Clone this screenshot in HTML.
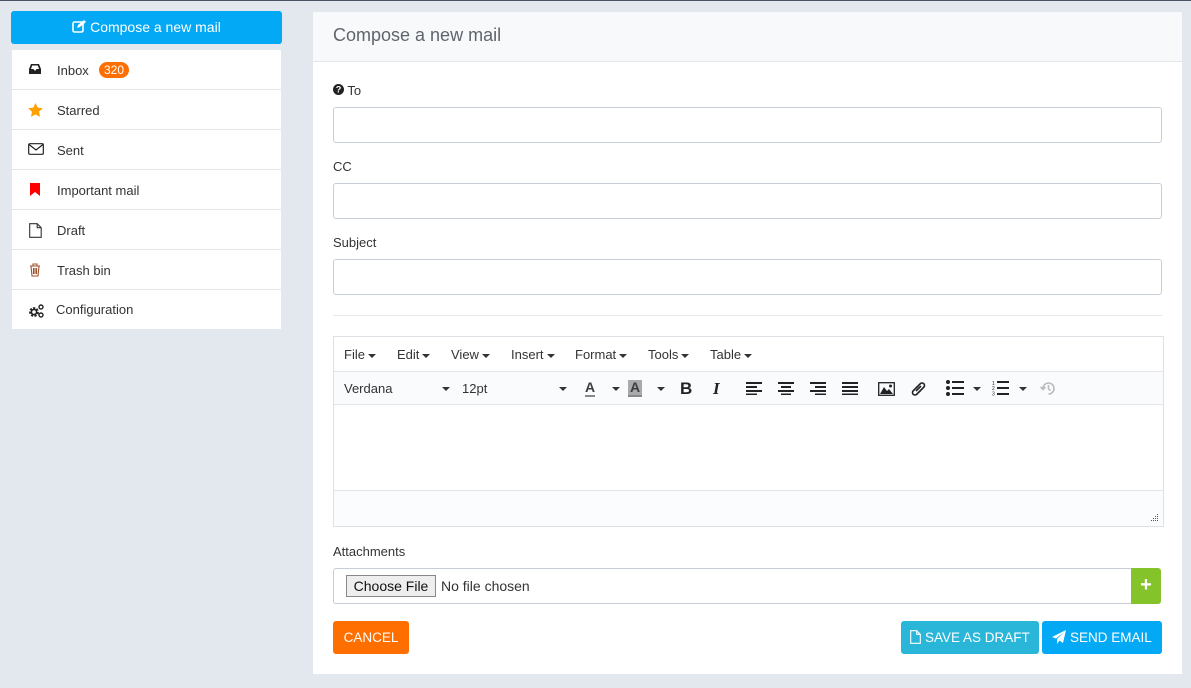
<!DOCTYPE html>
<html><head><meta charset="utf-8"><style>
*{box-sizing:border-box;margin:0;padding:0}
body{width:1191px;height:688px;background:#e3e7ee;font-family:"Liberation Sans",Arial,sans-serif;position:relative;overflow:hidden;color:#3a3f44;font-size:13px}
.topline{position:absolute;left:0;top:0;width:1191px;height:1px;background:#4a5366}
.a{position:absolute}
.compose{left:11px;top:11px;width:271px;height:33px;background:#03a9f4;border-radius:3px;color:#fff;font-size:14px;text-align:center;line-height:32px}
.side{left:12px;top:50px;width:269px;height:279px;background:#fff}
.row{position:absolute;left:0;width:269px;height:40px;border-bottom:1px solid #e3e5e8;font-size:13px;color:#333}
.row span.t{position:absolute;left:45px;top:13px}
.row svg{position:absolute;left:16px;top:13px}
.badge{position:absolute;left:87px;top:12px;background:#ff6f00;color:#fff;font-size:12px;border-radius:9px;padding:1px 5px;line-height:14px}
.card{left:313px;top:12px;width:869px;height:662px;background:#fff}
.head{position:absolute;left:0;top:0;width:869px;height:50px;background:#f8f9fb;border-bottom:1px solid #e3e6ea}
.head div{position:absolute;left:20px;top:13px;font-size:18px;color:#5f656c}
.lbl{position:absolute;left:20px;font-size:13px;color:#333}
.inp{position:absolute;left:20px;width:829px;height:36px;border:1px solid #c7ced8;border-radius:3px;background:#fff}
.btn{position:absolute;top:609px;height:33px;color:#fff;font-size:13.5px;line-height:33px;text-align:center;border-radius:3px}
.mb{position:absolute;top:10px;font-size:13px;color:#333}
.car{display:inline-block;width:0;height:0;border-left:4px solid transparent;border-right:4px solid transparent;border-top:4px solid #333;vertical-align:middle;margin-left:3px}
</style></head><body>
<div class="topline"></div>
<div class="a compose"><svg width="14" height="13" viewBox="0 0 14 13" style="vertical-align:-1px"><rect x="1" y="2" width="10" height="10" rx="1.5" fill="none" stroke="#fff" stroke-width="1.6"/><path d="M5 8l1-3 6-5 2 2-6 5z" fill="#fff"/></svg> Compose a new mail</div>
<div class="a side">
<div class="row" style="top:0"><svg width="14" height="12" viewBox="0 0 14 12"><path d="M1 6L3 1h8l2 5v5H1z" fill="#222"/><path d="M3 6h2.5l1 1.5h1L8.5 6H11L9.8 2.5H4.2z" fill="#fff"/></svg><span class="t">Inbox</span><span class="badge">320</span></div>
<div class="row" style="top:40px"><svg width="15" height="14" viewBox="0 0 24 23"><path d="M12 0l3.6 7.6 8.4 1-6.2 5.8 1.6 8.4L12 18.6 4.6 22.8l1.6-8.4L0 8.6l8.4-1z" fill="#ffa000"/></svg><span class="t">Starred</span></div>
<div class="row" style="top:80px"><svg width="16" height="12" viewBox="0 0 16 12"><rect x="0.7" y="0.7" width="14.6" height="10.6" rx="1" fill="none" stroke="#222" stroke-width="1.2"/><path d="M1 1.5l7 5.5 7-5.5" fill="none" stroke="#222" stroke-width="1.2"/></svg><span class="t">Sent</span></div>
<div class="row" style="top:120px"><svg width="12" height="13" viewBox="0 0 12 13" style="left:17px"><path d="M1 0h10v13L6 9 1 13z" fill="#f00"/></svg><span class="t">Important mail</span></div>
<div class="row" style="top:160px"><svg width="13" height="15" viewBox="0 0 13 15" style="left:17px"><path d="M.7.7h7.5l4 4v9.6H.7z M8.2.7v4h4" fill="none" stroke="#333" stroke-width="1.1"/></svg><span class="t">Draft</span></div>
<div class="row" style="top:200px"><svg width="12" height="14" viewBox="0 0 12 14" style="left:17px"><path d="M1 3h10M4 3V1h4v2M2 3l1 10h6l1-10M4.5 5v6M6 5v6M7.5 5v6" fill="none" stroke="#a0522d" stroke-width="1.1"/></svg><span class="t">Trash bin</span></div>
<div class="row" style="top:240px;border:0"><svg width="17" height="15" viewBox="0 0 17 15"><circle cx="6" cy="9" r="3.6" fill="none" stroke="#222" stroke-width="2.6" stroke-dasharray="2 1.2"/><circle cx="6" cy="9" r="2.6" fill="none" stroke="#222" stroke-width="1.6"/><circle cx="13" cy="4" r="2" fill="none" stroke="#222" stroke-width="1.4"/><circle cx="13" cy="12" r="2" fill="none" stroke="#222" stroke-width="1.4"/></svg><span class="t" style="left:44px;top:12px">Configuration</span></div>
</div>
<div class="a card">
<div class="head"><div>Compose a new mail</div></div>
<div class="lbl" style="top:71px"><svg width="11" height="11" viewBox="0 0 12 12" style="vertical-align:0"><circle cx="6" cy="6" r="6" fill="#222"/><text x="6" y="9.5" font-size="10" font-weight="bold" fill="#fff" text-anchor="middle" font-family="Liberation Sans">?</text></svg> To</div>
<div class="inp" style="top:95px"></div>
<div class="lbl" style="top:147px">CC</div>
<div class="inp" style="top:171px"></div>
<div class="lbl" style="top:223px">Subject</div>
<div class="inp" style="top:247px"></div>
<div class="a" style="left:20px;top:303px;width:829px;height:1px;background:#e6e8eb"></div>
<div class="a" style="left:20px;top:324px;width:831px;height:191px;border:1px solid #dde0e4;background:#fff">
 <div class="a" style="left:0;top:0;width:829px;height:35px;background:#fff;border-bottom:1px solid #e3e5e8">
  <span class="mb" style="left:10px">File<i class="car"></i></span>
  <span class="mb" style="left:63px">Edit<i class="car"></i></span>
  <span class="mb" style="left:117px">View<i class="car"></i></span>
  <span class="mb" style="left:177px">Insert<i class="car"></i></span>
  <span class="mb" style="left:241px">Format<i class="car"></i></span>
  <span class="mb" style="left:314px">Tools<i class="car"></i></span>
  <span class="mb" style="left:376px">Table<i class="car"></i></span>
 </div>
 <div class="a" style="left:0;top:35px;width:829px;height:33px;background:#fafbfc;border-bottom:1px solid #e3e5e8">
  <span class="mb" style="left:10px;top:9px">Verdana</span><i class="car a" style="left:105px;top:15px"></i>
  <span class="mb" style="left:128px;top:9px">12pt</span><i class="car a" style="left:222px;top:15px"></i>
  <span class="a" style="left:251px;top:8px;font-weight:bold;font-size:14px;border-bottom:2px solid #888;line-height:15px">A</span><i class="car a" style="left:275px;top:15px"></i>
  <span class="a" style="left:294px;top:8px;font-weight:bold;font-size:14px;background:#aaa;padding:0 2px;line-height:15px;border-bottom:2px solid #888">A</span><i class="car a" style="left:320px;top:15px"></i>
  <span class="a" style="left:346px;top:7px;font-weight:bold;font-size:17px;color:#222">B</span>
  <span class="a" style="left:379px;top:7px;font-weight:bold;font-style:italic;font-size:17px;color:#222;font-family:'Liberation Serif',serif">I</span>
  <svg class="a" style="left:412px;top:10px" width="130" height="13" viewBox="0 0 130 13" stroke="#222" stroke-width="2"><path d="M0 1h16M0 5h11M0 9h16M0 12.5h11"/><path d="M32 1h16M35 5h10M32 9h16M35 12.5h10"/><path d="M64 1h16M69 5h11M64 9h16M69 12.5h11"/><path d="M96 1h16M96 5h16M96 9h16M96 12.5h16"/></svg>
  <svg class="a" style="left:544px;top:10px" width="17" height="14" viewBox="0 0 17 14"><rect x=".7" y=".7" width="15.6" height="12.6" fill="none" stroke="#222" stroke-width="1.3"/><path d="M2 12l4-7 3 4 2-2 4 5z" fill="#222"/><circle cx="12.5" cy="4" r="1.5" fill="#222"/></svg>
  <svg class="a" style="left:576px;top:9px" width="17" height="16" viewBox="0 0 17 16" fill="none" stroke="#222" stroke-width="1.6"><path d="M7 6l-4 4a2.5 2.5 0 003.5 3.5l4-4"/><path d="M10 10l4-4A2.5 2.5 0 0010.5 2.5l-4 4"/><path d="M6 10l5-5"/></svg>
  <svg class="a" style="left:612px;top:8px" width="18" height="16" viewBox="0 0 18 16" fill="#222"><circle cx="2" cy="2" r="2"/><circle cx="2" cy="8" r="2"/><circle cx="2" cy="14" r="2"/><rect x="6" y="1" width="12" height="2"/><rect x="6" y="7" width="12" height="2"/><rect x="6" y="13" width="12" height="2"/></svg><i class="car a" style="left:636px;top:15px"></i>
  <svg class="a" style="left:658px;top:8px" width="17" height="16" viewBox="0 0 17 16" fill="#222"><text x="0" y="5" font-size="5">1</text><text x="0" y="10" font-size="5">2</text><text x="0" y="15.5" font-size="5">3</text><rect x="5" y="1" width="12" height="2"/><rect x="5" y="7" width="12" height="2"/><rect x="5" y="13" width="12" height="2"/></svg><i class="car a" style="left:682px;top:15px"></i>
  <svg class="a" style="left:706px;top:9px" width="16" height="15" viewBox="0 0 16 15" fill="none" stroke="#bbb" stroke-width="1.6"><path d="M3 7.5a5.5 5.5 0 115.5 5.5"/><path d="M0.5 6l2.5 2.5 2.5-2.5"/><path d="M8.5 4v4l2 1.5"/></svg>
 </div>
 <div class="a" style="left:0;top:153px;width:829px;height:36px;background:#fbfcfd;border-top:1px solid #e3e5e8"></div>
 <svg class="a" style="left:817px;top:177px" width="8" height="8" viewBox="0 0 8 8" fill="#555"><rect x="6" y="0" width="1" height="1"/><rect x="4" y="2" width="1" height="1"/><rect x="6" y="2" width="1" height="1"/><rect x="2" y="4" width="1" height="1"/><rect x="4" y="4" width="1" height="1"/><rect x="6" y="4" width="1" height="1"/><rect x="0" y="6" width="1" height="1"/><rect x="2" y="6" width="1" height="1"/><rect x="4" y="6" width="1" height="1"/><rect x="6" y="6" width="1" height="1"/></svg>
</div>
<div class="lbl" style="top:532px">Attachments</div>
<div class="inp" style="top:556px;width:800px;border-right:0;border-radius:3px 0 0 3px"></div>
<div class="a" style="left:33px;top:563px;width:90px;height:22px;border:1px solid #888;background:#eee;font-size:14px;text-align:center;line-height:20px;color:#111">Choose File</div>
<div class="a" style="left:128px;top:566px;font-size:14px;color:#333">No file chosen</div>
<div class="a" style="left:818px;top:556px;width:30px;height:36px;background:#84c42a;border-radius:0 3px 3px 0;color:#fff;font-size:20px;font-weight:bold;text-align:center;line-height:34px">+</div>
<div class="btn" style="left:20px;width:76px;background:#ff6f00">CANCEL</div>
<div class="btn" style="left:588px;width:138px;background:#29b6d9"><svg width="11" height="14" viewBox="0 0 11 14" style="vertical-align:-2px"><path d="M.7.7h6l3.6 3.6v9H.7z M6.7.7v3.6h3.6" fill="none" stroke="#fff" stroke-width="1.1"/></svg> SAVE AS DRAFT</div>
<div class="btn" style="left:729px;width:120px;background:#03a9f4"><svg width="14" height="14" viewBox="0 0 14 14" style="vertical-align:-2px"><path d="M14 0L0 7l4 1.5L12 2 5 9v5l2.5-3.5L11 13z" fill="#fff"/></svg> SEND EMAIL</div>
</div>
</body></html>
